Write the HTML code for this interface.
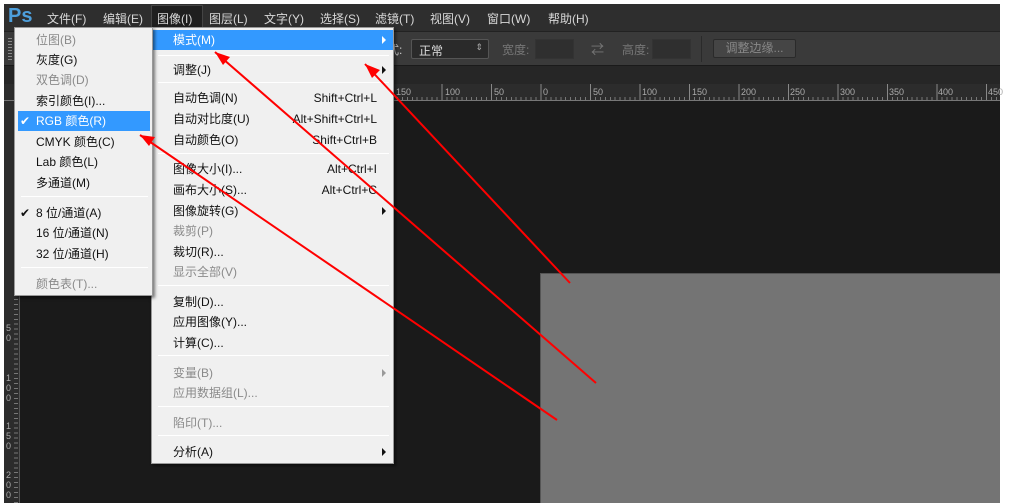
<!DOCTYPE html>
<html><head><meta charset="utf-8"><style>
*{margin:0;padding:0;box-sizing:border-box}
body{width:1009px;height:503px;overflow:hidden;background:#fff;position:relative;font-family:"Liberation Sans","Noto Sans CJK SC",sans-serif;font-size:12px}
.a{position:absolute}
.mb{left:4px;top:4px;width:996px;height:27px;background:#2e2e2e;color:#d8d8d8}
.mb span{position:absolute;top:6px;font-size:12px}
.ob{left:4px;top:31px;width:996px;height:34px;background:#3a3a3a;border-top:1px solid #222}
.tb{left:4px;top:65px;width:996px;height:19px;background:#262626;border-top:1px solid #1a1a1a}
.ru{left:4px;top:84px;width:996px;height:17px;background:#2c2c2c}
.cv{left:4px;top:101px;width:996px;height:402px;background:#1a1a1a}
.lr{left:4px;top:101px;width:16px;height:402px;background:#2c2c2c}
.menu{background:#f0f0f0;border:1px solid #999;box-shadow:2px 2px 3px rgba(0,0,0,.5);color:#111;font-size:12px}
.it{position:absolute;left:0;right:0;height:20px;line-height:20px}
.it .t{position:absolute;left:21px}
.it .k{position:absolute;right:16px}
.dis{color:#8a8a8a}
.sep{position:absolute;left:6px;right:4px;height:1px;background:#c8c8c8;border-bottom:1px solid #fff}
.hl{background:#3399ff;color:#fff}
.tri{position:absolute;right:7px;top:6px;width:0;height:0;border-left:4px solid #111;border-top:4px solid transparent;border-bottom:4px solid transparent}
.rl{position:absolute;top:3px;font-size:9px;color:#aaa}
</style></head><body>
<div class="a mb">
<span style="left:4px;top:1px;font-size:20px;font-weight:bold;color:#4d9fdc">Ps</span>
<span style="left:43px">文件(F)</span><span style="left:99px">编辑(E)</span>
<div class="a" style="left:147px;top:1px;width:52px;height:25px;background:#1f1f1f;border:1px solid #444"></div>
<span style="left:153px">图像(I)</span><span style="left:205px">图层(L)</span><span style="left:260px">文字(Y)</span><span style="left:316px">选择(S)</span><span style="left:371px">滤镜(T)</span><span style="left:426px">视图(V)</span><span style="left:483px">窗口(W)</span><span style="left:544px">帮助(H)</span>
</div>
<div class="a ob">
<div class="a" style="left:4px;top:6px;width:4px;height:22px;background:repeating-linear-gradient(#888 0 1px,transparent 1px 3px)"></div>
<span class="a" style="left:383px;top:9px;color:#ccc">式:</span>
<div class="a" style="left:407px;top:7px;width:78px;height:20px;background:#2a2a2a;border:1px solid #555;border-radius:2px;color:#ddd;padding:2px 0 0 7px">正常<span class="a" style="right:5px;top:2px;font-size:9px;color:#aaa">⇕</span></div>
<span class="a" style="left:498px;top:9px;color:#777">宽度:</span>
<div class="a" style="left:531px;top:7px;width:39px;height:20px;background:#2f2f2f;border:1px solid #333"></div>
<span class="a" style="left:587px;top:7px;color:#777;font-size:13px">⇄</span>
<span class="a" style="left:618px;top:9px;color:#777">高度:</span>
<div class="a" style="left:648px;top:7px;width:39px;height:20px;background:#2f2f2f;border:1px solid #333"></div>
<div class="a" style="left:697px;top:4px;width:1px;height:26px;background:#2a2a2a"></div>
<div class="a" style="left:709px;top:7px;width:83px;height:19px;background:#454545;border:1px solid #2a2a2a;border-radius:2px;color:#888;text-align:center;line-height:17px">调整边缘...</div>
</div>
<div class="a tb"></div>
<div class="a cv"></div>
<div class="a ru">
<div class="a" style="left:388px;top:13px;width:608px;height:3px;background:repeating-linear-gradient(90deg,#777 0 1px,transparent 1px 4.95px)"></div>
<div class="a" style="left:388px;top:0;width:608px;height:17px;background:repeating-linear-gradient(90deg,#888 0 1px,transparent 1px 49.5px)"></div>
<div class="a" style="left:0;top:16px;width:996px;height:1px;background:#777"></div>
<span class="rl" style="left:392px">150</span><span class="rl" style="left:441px">100</span><span class="rl" style="left:490px">50</span><span class="rl" style="left:539px">0</span><span class="rl" style="left:589px">50</span><span class="rl" style="left:638px">100</span><span class="rl" style="left:688px">150</span><span class="rl" style="left:737px">200</span><span class="rl" style="left:786px">250</span><span class="rl" style="left:836px">300</span><span class="rl" style="left:885px">350</span><span class="rl" style="left:934px">400</span><span class="rl" style="left:984px">450</span>
</div>
<div class="a lr">
<div class="a" style="left:10px;top:0;width:4px;height:402px;background:repeating-linear-gradient(#777 0 1px,transparent 1px 4.95px)"></div>
<div class="a" style="left:2px;top:222px;font-size:9px;color:#aaa;line-height:10px">5<br>0</div>
<div class="a" style="left:2px;top:272px;font-size:9px;color:#aaa;line-height:10px">1<br>0<br>0</div>
<div class="a" style="left:2px;top:320px;font-size:9px;color:#aaa;line-height:10px">1<br>5<br>0</div>
<div class="a" style="left:2px;top:369px;font-size:9px;color:#aaa;line-height:10px">2<br>0<br>0</div>
<div class="a" style="left:15px;top:0;width:1px;height:402px;background:#555"></div>
</div>
<div class="a" style="left:540px;top:273px;width:460px;height:230px;background:#747474;border-top:1px solid #555;border-left:1px solid #555"></div>

<div class="a menu" style="left:151px;top:27px;width:243px;height:437px">
<div class="it hl" style="top:2px"><span class="t">模式(M)</span><div class="tri" style="border-left-color:#fff"></div></div>
<div class="sep" style="top:27px"></div>
<div class="it" style="top:32px"><span class="t">调整(J)</span><div class="tri"></div></div>
<div class="sep" style="top:54px"></div>
<div class="it" style="top:60px"><span class="t">自动色调(N)</span><span class="k">Shift+Ctrl+L</span></div>
<div class="it" style="top:81px"><span class="t">自动对比度(U)</span><span class="k">Alt+Shift+Ctrl+L</span></div>
<div class="it" style="top:102px"><span class="t">自动颜色(O)</span><span class="k">Shift+Ctrl+B</span></div>
<div class="sep" style="top:125px"></div>
<div class="it" style="top:131px"><span class="t">图像大小(I)...</span><span class="k">Alt+Ctrl+I</span></div>
<div class="it" style="top:152px"><span class="t">画布大小(S)...</span><span class="k">Alt+Ctrl+C</span></div>
<div class="it" style="top:173px"><span class="t">图像旋转(G)</span><div class="tri"></div></div>
<div class="it dis" style="top:193px"><span class="t">裁剪(P)</span></div>
<div class="it" style="top:214px"><span class="t">裁切(R)...</span></div>
<div class="it dis" style="top:234px"><span class="t">显示全部(V)</span></div>
<div class="sep" style="top:257px"></div>
<div class="it" style="top:264px"><span class="t">复制(D)...</span></div>
<div class="it" style="top:284px"><span class="t">应用图像(Y)...</span></div>
<div class="it" style="top:305px"><span class="t">计算(C)...</span></div>
<div class="sep" style="top:327px"></div>
<div class="it dis" style="top:335px"><span class="t">变量(B)</span><div class="tri" style="border-left-color:#999"></div></div>
<div class="it dis" style="top:355px"><span class="t">应用数据组(L)...</span></div>
<div class="sep" style="top:378px"></div>
<div class="it dis" style="top:385px"><span class="t">陷印(T)...</span></div>
<div class="sep" style="top:407px"></div>
<div class="it" style="top:414px"><span class="t">分析(A)</span><div class="tri"></div></div>
</div>

<div class="a menu" style="left:14px;top:27px;width:139px;height:269px">
<div class="it dis" style="top:2px"><span class="t">位图(B)</span></div>
<div class="it" style="top:22px"><span class="t">灰度(G)</span></div>
<div class="it dis" style="top:42px"><span class="t">双色调(D)</span></div>
<div class="it" style="top:63px"><span class="t">索引颜色(I)...</span></div>
<div class="it hl" style="top:83px;left:3px;right:2px"><span class="a" style="left:2px">✔</span><span class="t" style="left:18px">RGB 颜色(R)</span></div>
<div class="it" style="top:104px"><span class="t">CMYK 颜色(C)</span></div>
<div class="it" style="top:124px"><span class="t">Lab 颜色(L)</span></div>
<div class="it" style="top:145px"><span class="t">多通道(M)</span></div>
<div class="sep" style="top:168px"></div>
<div class="it" style="top:175px"><span class="a" style="left:5px">✔</span><span class="t">8 位/通道(A)</span></div>
<div class="it" style="top:195px"><span class="t">16 位/通道(N)</span></div>
<div class="it" style="top:216px"><span class="t">32 位/通道(H)</span></div>
<div class="sep" style="top:239px"></div>
<div class="it dis" style="top:246px"><span class="t">颜色表(T)...</span></div>
</div>

<svg class="a" style="left:0;top:0" width="1009" height="503">
<g stroke="#f00" stroke-width="2" fill="none">
<path d="M570 283L365 64"/><path d="M596 383L215 52"/><path d="M557 420L140 135"/>
</g>
<g fill="#f00">
<path d="M365 64L380 70L372 78Z"/>
<path d="M215 52L230 57L223 65Z"/>
<path d="M140 135L155 137L149 146Z"/>
</g>
</svg>
</body></html>
